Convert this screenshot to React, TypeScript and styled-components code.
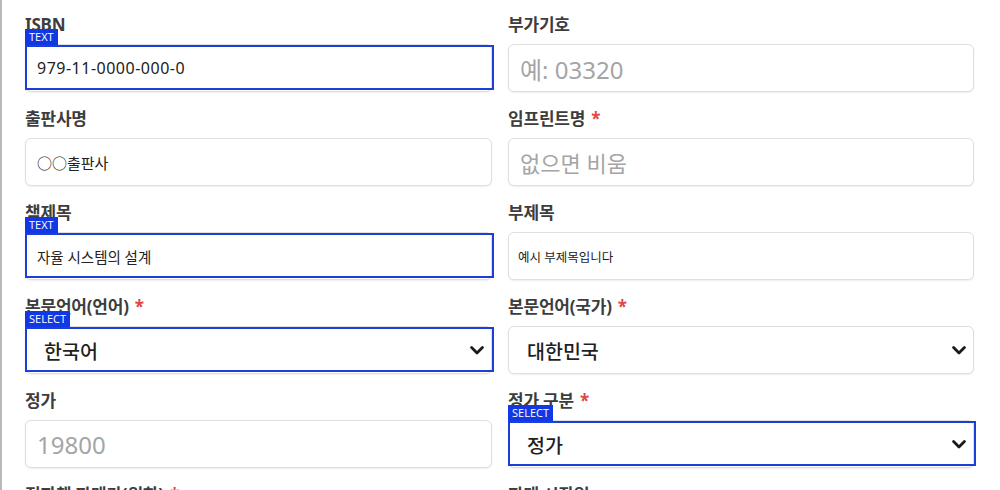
import React from 'react';
import styled, { createGlobalStyle } from 'styled-components';

const GlobalStyle = createGlobalStyle`
  html, body {
    margin: 0;
    padding: 0;
    background: #ffffff;
    overflow: hidden;
  }
  body {
    font-family: "Noto Sans", "Noto Sans CJK KR", sans-serif;
  }
`;

const Page = styled.div`
  height: 490px;
  border-left: 2px solid #b9b9b9;
  box-sizing: border-box;
  padding: 14px 0 0 23px;
  overflow: hidden;
`;

const FormGrid = styled.div`
  display: grid;
  grid-template-columns: 467px 466px;
  column-gap: 16px;
  row-gap: 16px;
`;

const Field = styled.div`
  display: flex;
  flex-direction: column;
  gap: 8px;
`;

const Label = styled.div`
  font-size: 17px;
  line-height: 22px;
  height: 22px;
  font-weight: 700;
  color: #3d3d3d;
  letter-spacing: -0.2px;
  white-space: nowrap;
`;

const Required = styled.span`
  color: #e04848;
  margin-left: 6px;
`;

const Control = styled.div<{ $pad: number }>`
  position: relative;
  box-sizing: border-box;
  height: 48px;
  display: flex;
  align-items: center;
  justify-content: space-between;
  padding: 0 7px 0 ${(p) => p.$pad}px;
  border: 1px solid #dfdfdf;
  border-radius: 6px;
  box-shadow: 0 1px 2px rgba(0, 0, 0, 0.07);
  background: #fff;
`;

const Value = styled.span<{ $size: number; $spacing: number }>`
  font-size: ${(p) => p.$size}px;
  letter-spacing: ${(p) => p.$spacing}px;
  color: #222;
  white-space: nowrap;
`;

const Placeholder = styled.span<{ $size: number }>`
  font-size: ${(p) => p.$size}px;
  color: #a5a5a5;
  white-space: nowrap;
`;

const SelectValue = styled.span`
  font-size: 19.5px;
  font-weight: 500;
  color: #1f1f1f;
  white-space: nowrap;
`;

const Chevron = styled.svg`
  width: 14px;
  height: 9px;
  flex-shrink: 0;
`;

const Highlight = styled.div`
  position: absolute;
  top: 0;
  bottom: 1px;
  left: -1px;
  right: -3px;
  border: 2px solid #1c3fd8;
  pointer-events: none;
`;

const Badge = styled.span`
  position: absolute;
  left: -2px;
  top: -18px;
  height: 16px;
  padding: 0 4px;
  background: #1238e4;
  color: #fff;
  font-family: "Open Sans", "Liberation Sans", sans-serif;
  font-size: 11px;
  line-height: 16px;
`;

type Spec = {
  label: string;
  required?: boolean;
  kind: 'text' | 'select';
  value?: string;
  placeholder?: string;
  size?: number;
  spacing?: number;
  pad?: number;
  badge?: string;
};

const fields: Spec[] = [
  { label: 'ISBN', kind: 'text', value: '979-11-0000-000-0', size: 16, spacing: 0.5, badge: 'TEXT' },
  { label: '부가기호', kind: 'text', placeholder: '예: 03320', size: 24 },
  { label: '출판사명', kind: 'text', value: '○○출판사', size: 15 },
  { label: '임프린트명', required: true, kind: 'text', placeholder: '없으면 비움', size: 22 },
  { label: '책제목', kind: 'text', value: '자율 시스템의 설계', size: 14.5, badge: 'TEXT' },
  { label: '부제목', kind: 'text', value: '예시 부제목입니다', size: 12.5, pad: 9 },
  { label: '본문언어(언어)', required: true, kind: 'select', value: '한국어', badge: 'SELECT' },
  { label: '본문언어(국가)', required: true, kind: 'select', value: '대한민국' },
  { label: '정가', kind: 'text', placeholder: '19800', size: 24 },
  { label: '정가 구분', required: true, kind: 'select', value: '정가', badge: 'SELECT' },
  { label: '전자책 판매가(원화)', required: true, kind: 'text', placeholder: '' },
  { label: '판매 시작일', kind: 'text', placeholder: '' },
];

const FormField: React.FC<{ spec: Spec }> = ({ spec }) => (
  <Field>
    <Label>
      {spec.label}
      {spec.required && <Required>*</Required>}
    </Label>
    <Control $pad={spec.kind === 'select' ? 18 : spec.pad ?? 11}>
      {spec.kind === 'select' ? (
        <>
          <SelectValue>{spec.value}</SelectValue>
          <Chevron viewBox="0 0 14 9">
            <polyline
              points="1.6,1.6 7,7 12.4,1.6"
              fill="none"
              stroke="#1a1a1a"
              strokeWidth="2.8"
              strokeLinecap="round"
              strokeLinejoin="round"
            />
          </Chevron>
        </>
      ) : spec.value ? (
        <Value $size={spec.size ?? 16} $spacing={spec.spacing ?? 0}>
          {spec.value}
        </Value>
      ) : (
        <Placeholder $size={spec.size ?? 16}>{spec.placeholder}</Placeholder>
      )}
      {spec.badge && (
        <Highlight>
          <Badge>{spec.badge}</Badge>
        </Highlight>
      )}
    </Control>
  </Field>
);

const App: React.FC = () => {
  return (
    <>
      <GlobalStyle />
      <Page>
        <FormGrid>
          {fields.map((f) => (
            <FormField key={f.label} spec={f} />
          ))}
        </FormGrid>
      </Page>
    </>
  );
};

export default App;
